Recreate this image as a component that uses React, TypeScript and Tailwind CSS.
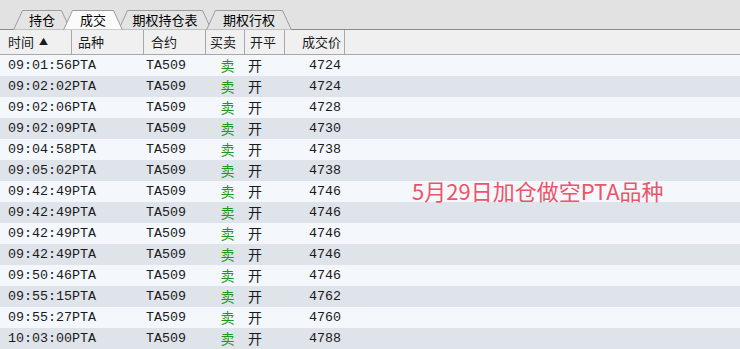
import React from "react";

const trades = [
  ["09:01:56", "4724"],
  ["09:02:02", "4724"],
  ["09:02:06", "4728"],
  ["09:02:09", "4730"],
  ["09:04:58", "4738"],
  ["09:05:02", "4738"],
  ["09:42:49", "4746"],
  ["09:42:49", "4746"],
  ["09:42:49", "4746"],
  ["09:42:49", "4746"],
  ["09:50:46", "4746"],
  ["09:55:15", "4762"],
  ["09:55:27", "4760"],
  ["10:03:00", "4788"],
];

const tabs = [
  { label: "持仓", pos: "left-[13px] w-[58px]", width: 58, active: false },
  { label: "成交", pos: "left-[63px] w-[60px]", width: 60, active: true },
  { label: "期权持仓表", pos: "left-[118px] w-[94px]", width: 94, active: false },
  { label: "期权行权", pos: "left-[206px] w-[86px]", width: 86, active: false },
];

const cols = "grid grid-cols-[72px_72px_62px_39px_40px_60px_1fr]";
const cjk = "font-['Noto_Sans_CJK_SC','Noto_Sans',sans-serif]";
const mono = "font-['Liberation_Mono','Noto_Sans_CJK_SC',monospace]";

function Tab({ label, pos, width, active }: (typeof tabs)[number]) {
  return (
    <div className={`absolute top-[10px] ${pos} ${active ? "z-10 h-[20px]" : "h-[19px]"}`}>
      <svg className="absolute inset-0" width={width} height={20} viewBox={`0 0 ${width} 20`}>
        <polygon
          points={`0.5,20 9.5,0.5 ${width - 9.5},0.5 ${width - 0.5},20`}
          fill={active ? "#fbfbfb" : "#e4e4e4"}
          stroke="#9c9c9c"
          strokeWidth={1}
        />
      </svg>
      <span className={`relative flex h-full items-center justify-center text-[13px] text-black ${cjk}`}>
        {label}
      </span>
    </div>
  );
}

export default function App() {
  return (
    <div className="relative h-[349px] w-[740px] overflow-hidden bg-[#f4f8fd]">
      {/* tab strip */}
      <div className="relative h-[30px] border-b border-[#8a8a8a] bg-[#e2e2e2]">
        {tabs.map((t) => (
          <Tab key={t.label} {...t} />
        ))}
      </div>

      {/* header */}
      <div className={`${cols} h-[25px] border-b border-[#a8a8a8] bg-[#f0f0f0] text-[13px] text-[#1a1a1a] ${cjk}`}>
        <div className="flex items-center gap-[5px] border-r border-[#a8a8a8] pl-2">
          时间<span className="text-[9px]">▲</span>
        </div>
        <div className="flex items-center border-r border-[#a8a8a8] pl-[6px]">品种</div>
        <div className="flex items-center border-r border-[#a8a8a8] pl-[7px]">合约</div>
        <div className="flex items-center border-r border-[#a8a8a8] pl-[4px]">买卖</div>
        <div className="flex items-center border-r border-[#a8a8a8] pl-[5px]">开平</div>
        <div className="flex items-center justify-end border-r border-[#a8a8a8] pr-[3px]">成交价</div>
        <div />
      </div>

      {/* rows */}
      <div className="flex flex-col">
        {trades.map(([time, price], i) => (
          <div
            key={i}
            className={`${cols} h-[21px] text-[13.33px] text-[#1a1a1a] ${i % 2 === 0 ? "bg-[#f4f8fd]" : "bg-[#dfe3ea]"}`}
          >
            <div className={`flex items-center pl-2 ${mono}`}>{time}</div>
            <div className={`flex items-center ${mono}`}>PTA</div>
            <div className={`flex items-center pl-[2px] ${mono}`}>TA509</div>
            <div className={`flex items-center justify-center pl-[4px] text-[14px] text-[#1c9a1c] ${cjk}`}>卖</div>
            <div className={`flex items-center pl-[3px] text-[14px] ${cjk}`}>开</div>
            <div className={`flex items-center justify-end pr-[4px] ${mono}`}>{price}</div>
            <div />
          </div>
        ))}
      </div>

      {/* annotation */}
      <div className={`absolute left-[412px] top-[176px] text-[22px] leading-[28px] text-[#ec5468] ${cjk}`}>
        5月29日加仓做空PTA品种
      </div>
    </div>
  );
}
